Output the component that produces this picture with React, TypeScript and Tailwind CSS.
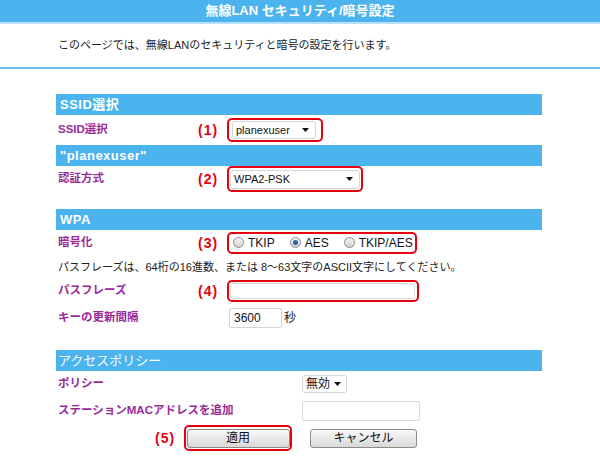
import React from 'react';

function SectionBar({ children }: { children: React.ReactNode }) {
  return (
    <div className="h-[21px] bg-[#4bb3ee] text-white font-bold text-[13px] tracking-[0.5px] pl-[4px] flex items-center">
      {children}
    </div>
  );
}

function Label({ children, width = 'w-[142px]' }: { children: React.ReactNode; width?: string }) {
  return (
    <span className={`${width} shrink-0 pl-[2px] text-[#992b99] font-bold text-[11.5px] leading-none`}>
      {children}
    </span>
  );
}

function Mark({ n }: { n: number }) {
  return (
    <span className="w-[29px] shrink-0 text-[#e60012] font-bold text-[14px] tracking-[1px] leading-none">
      ({n})
    </span>
  );
}

function Caret() {
  return (
    <svg width="7" height="4" viewBox="0 0 7 4">
      <path d="M0 0h7L3.5 4z" fill="#111" />
    </svg>
  );
}

function Radio({ checked, label }: { checked?: boolean; label: string }) {
  return (
    <span className="flex items-center gap-[4px]">
      <span className="w-[11px] h-[11px] rounded-full border border-[#8c8c8c] bg-gradient-to-b from-[#f4f4f4] to-[#d2d2d2] flex items-center justify-center">
        {checked && <span className="w-[5px] h-[5px] rounded-full bg-[#2c5da8]" />}
      </span>
      <span className="text-[12px] text-[#111]">{label}</span>
    </span>
  );
}

export default function App() {
  return (
    <div className="w-[600px] h-[475px] bg-white overflow-hidden font-['Liberation_Sans','Noto_Sans_CJK_JP',sans-serif] text-[#1a1a1a]">
      {/* page title */}
      <div className="h-[24px] bg-[#4bb3ee] border-b-2 border-[#b7e1f8] flex items-center justify-center text-white font-bold text-[13px]">
        無線LAN セキュリティ/暗号設定
      </div>
      <div className="h-[43px] flex items-center pl-[58px] text-[11px] text-[#222]">
        このページでは、無線LANのセキュリティと暗号の設定を行います。
      </div>
      <div className="h-[2px] bg-[#6cc1f1]" />

      <div className="ml-[56px] w-[486px] mt-[25px]">
        <SectionBar>SSID選択</SectionBar>
        <div className="h-[30px] flex items-center">
          <Label>SSID選択</Label>
          <Mark n={1} />
          <div className="w-[96px] h-[24px] border-2 border-[#e60012] rounded-[5px] flex items-center pl-[3px]">
            <div className="w-[84px] h-[18px] border border-[#d6d6d6] rounded-[3px] bg-white flex items-center justify-between pl-[3px] pr-[6px] text-[11px] text-[#111]">
              <span>planexuser</span>
              <Caret />
            </div>
          </div>
        </div>

        <SectionBar>"planexuser"</SectionBar>
        <div className="h-[43px]">
          <div className="h-[26px] flex items-center">
            <Label>認証方式</Label>
            <Mark n={2} />
            <div className="w-[136px] h-[26px] border-2 border-[#e60012] rounded-[5px] flex items-center pl-[1px]">
              <div className="w-[130px] h-[19px] border border-[#d6d6d6] rounded-[3px] bg-white flex items-center justify-between pl-[3px] pr-[6px] text-[11px] text-[#111]">
                <span>WPA2-PSK</span>
                <Caret />
              </div>
            </div>
          </div>
        </div>

        <SectionBar>WPA</SectionBar>
        <div className="h-[25px] flex items-center">
          <Label>暗号化</Label>
          <Mark n={3} />
          <div className="w-[190px] h-[22px] border-2 border-[#e60012] rounded-[5px] flex items-center pl-[4px] gap-[15px]">
            <Radio label="TKIP" />
            <Radio checked label="AES" />
            <Radio label="TKIP/AES" />
          </div>
        </div>
        <div className="h-[24px] flex items-center pl-[2px] text-[11px] text-[#222]">
          パスフレーズは、64桁の16進数、または 8〜63文字のASCII文字にしてください。
        </div>
        <div className="h-[24px] flex items-center">
          <Label>パスフレーズ</Label>
          <Mark n={4} />
          <div className="w-[192px] h-[22px] border-2 border-[#e60012] rounded-[5px] flex items-center pl-[1px]">
            <div className="w-[185px] h-[16px] border border-[#dcdcdc] rounded-[2px] bg-white" />
          </div>
        </div>
        <div className="h-[30px] flex items-center">
          <Label width="w-[173px]">キーの更新間隔</Label>
          <div className="w-[53px] h-[20px] border border-[#d4d4d4] rounded-[2px] bg-white flex items-center pl-[4px] text-[12px] text-[#111]">
            3600
          </div>
          <span className="ml-[2px] text-[12px] text-[#222]">秒</span>
        </div>

        <div className="mt-[17px]">
          <div className="h-[21px] bg-[#4bb3ee] text-white text-[13px] pl-[2px] flex items-center">
            アクセスポリシー
          </div>
        </div>
        <div className="h-[26px] flex items-center">
          <Label width="w-[246px]">ポリシー</Label>
          <div className="w-[45px] h-[18px] border border-[#d6d6d6] rounded-[3px] bg-white flex items-center justify-between pl-[3px] pr-[5px] text-[12px] text-[#111]">
            <span>無効</span>
            <Caret />
          </div>
        </div>
        <div className="h-[28px] flex items-center">
          <Label width="w-[246px]">ステーションMACアドレスを追加</Label>
          <div className="w-[118px] h-[20px] border border-[#d8d8d8] rounded-[2px] bg-white" />
        </div>
        <div className="h-[26px] flex items-center pl-[99px]">
          <Mark n={5} />
          <div className="w-[108px] h-[26px] border-2 border-[#e60012] rounded-[5px] flex items-center justify-center">
            <button className="w-[103px] h-[19px] border border-[#8a8a8a] rounded-[3px] bg-gradient-to-b from-[#fafafa] to-[#d8d8d8] text-[12px] text-[#111] leading-none">
              適用
            </button>
          </div>
          <button className="ml-[18px] w-[107px] h-[19px] border border-[#8a8a8a] rounded-[3px] bg-gradient-to-b from-[#fafafa] to-[#d8d8d8] text-[12px] text-[#111] leading-none">
            キャンセル
          </button>
        </div>
      </div>
    </div>
  );
}
